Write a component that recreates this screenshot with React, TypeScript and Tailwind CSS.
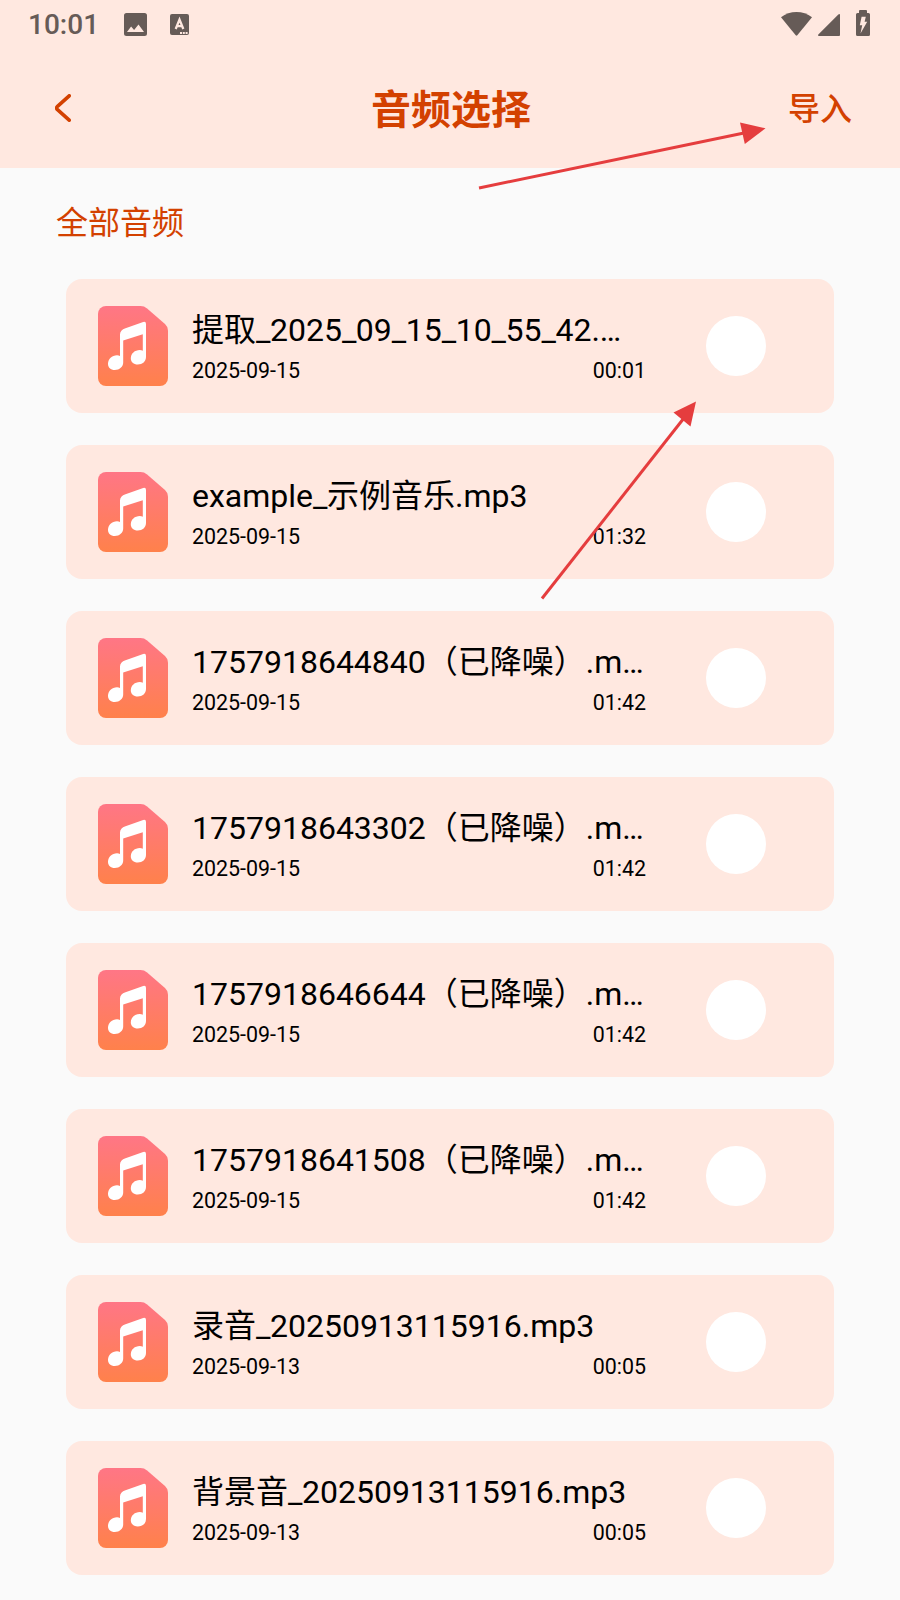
type Audio = {
  name: string;
  date: string;
  duration: string;
};

const audios: Audio[] = [
  { name: "提取_2025_09_15_10_55_42.…", date: "2025-09-15", duration: "00:01" },
  { name: "example_示例音乐.mp3", date: "2025-09-15", duration: "01:32" },
  { name: "1757918644840（已降噪）.m…", date: "2025-09-15", duration: "01:42" },
  { name: "1757918643302（已降噪）.m…", date: "2025-09-15", duration: "01:42" },
  { name: "1757918646644（已降噪）.m…", date: "2025-09-15", duration: "01:42" },
  { name: "1757918641508（已降噪）.m…", date: "2025-09-15", duration: "01:42" },
  { name: "录音_20250913115916.mp3", date: "2025-09-13", duration: "00:05" },
  { name: "背景音_20250913115916.mp3", date: "2025-09-13", duration: "00:05" },
];

function StatusBar() {
  return (
    <div className="flex h-12 items-center pl-7 pr-[30px] text-[#665b57]">
      <span className="w-[95.500px] pt-[2px] text-[28px] font-medium leading-none">10:01</span>
      <svg className="h-[23px] w-[23px]" viewBox="0 0 23 23" fill="currentColor">
        <path
          fillRule="evenodd"
          d="M2.5 0h18A2.5 2.5 0 0 1 23 2.5v18a2.5 2.5 0 0 1-2.5 2.5h-18A2.5 2.5 0 0 1 0 20.500v-18A2.500 2.500 0 0 1 2.500 0ZM3 19h17l-5.500-7.500-4.400 5.600-3-3.600Z"
        />
      </svg>
      <svg className="ml-[23px] h-[21px] w-[19px]" viewBox="0 0 19 21">
        <rect width="19" height="21" rx="2" fill="currentColor" />
        <path d="M5.700 15 9.500 5.500 13.300 15M7 12.200h5" fill="none" stroke="#ffe8e0" strokeWidth="2.300" />
        <path d="M10 18h2v2h-2zM12.800 18h2v2h-2zM15.600 18h2v2h-2z" fill="#ffe8e0" />
      </svg>
      <svg className="ml-auto h-6 w-[31px]" viewBox="0 0 31 24" fill="currentColor">
        <path d="M0 5.300C4.500 1.800 9.800 0 15.500 0S26.500 1.800 31 5.300L16.300 23.200q-.8.900-1.600 0Z" />
      </svg>
      <svg className="ml-1.5 mt-0.5 h-[22px] w-[22px]" viewBox="0 0 22 22" fill="currentColor">
        <path d="M22 1v20a1 1 0 0 1-1 1H1q-1.500-.2-.7-1.400L20.300.5Q22-.7 22 1Z" />
      </svg>
      <svg className="mb-0.5 ml-4 h-[26px] w-3.5" viewBox="0 0 14 26">
        <path
          d="M4 0h6a1 1 0 0 1 1 1v2h1.500A1.500 1.500 0 0 1 14 4.500v20a1.500 1.500 0 0 1-1.500 1.500h-11A1.500 1.500 0 0 1 0 24.500v-20A1.500 1.500 0 0 1 1.500 3H3V1a1 1 0 0 1 1-1Z"
          fill="currentColor"
        />
        <path d="M5.600 6.800h4.200L8.600 11.800h2.600L4.500 23.500l1.700-8.300H3.800Z" fill="#ffe8e0" />
      </svg>
    </div>
  );
}

function MusicFileIcon() {
  return (
    <svg className="h-20 w-[70px] shrink-0" viewBox="0 0 70 80">
      <defs>
        <linearGradient id="file" x1="0" y1="0" x2="0" y2="1">
          <stop offset="0" stopColor="#ff7686" />
          <stop offset="1" stopColor="#ff814b" />
        </linearGradient>
      </defs>
      <path
        d="M8 0h34.500q3.700 0 6.600 2.400L67 18q3 2.700 3 6.500V72a8 8 0 0 1-8 8H8a8 8 0 0 1-8-8V8a8 8 0 0 1 8-8Z"
        fill="url(#file)"
      />
      <path
        fillRule="evenodd"
        d="M27.500 22.200 45.200 16Q48 15.200 48 18v33c0 4.500-3.500 7.500-8.200 7.500-4.200 0-7-2.600-7-6 0-5 4-8.500 9-8.500 1 0 2 .2 3 .7V28.300L25.200 34.500v22c0 4.200-3.700 7.500-8.400 7.500-4.200 0-6.800-2.600-6.800-6 0-5 4-8.700 9-8.700 1.200 0 2.200.2 3 .7V28.500q0-4.500 5.500-6.300Z"
        fill="#fff"
      />
    </svg>
  );
}

function AudioCard({ audio }: { audio: Audio }) {
  return (
    <li className="flex h-[134px] items-center rounded-[16px] bg-[#ffe8e0] pl-8 pr-[68px]">
      <MusicFileIcon />
      <div className="ml-6 w-[454px] pt-[3px] text-black">
        <p className="h-[47px] whitespace-nowrap text-[32px] leading-[39px]">
          {audio.name.split(/(_)/).map((part, i) =>
            part === "_" ? (
              <span key={i} className="tracking-[-0.5px]">
                _
              </span>
            ) : (
              part
            ),
          )}
        </p>
        <div className="flex justify-between text-[21.400px] leading-[26px]">
          <span>{audio.date}</span>
          <span>{audio.duration}</span>
        </div>
      </div>
      <span className="ml-auto h-[60px] w-[60px] rounded-full bg-white" />
    </li>
  );
}

// hint arrows laid over the screen
function HintArrows() {
  return (
    <svg className="pointer-events-none absolute left-0 top-0 h-[1600px] w-[900px]" viewBox="0 0 900 1600">
      <g stroke="#e53d3e" strokeWidth="3">
        <path d="M479 188 744 133" />
        <path d="M542 598.500 684 418" />
      </g>
      <g fill="#e53d3e">
        <path d="M765.500 128.300 740 122.500 744.800 144Z" />
        <path d="M696 401.500 673.500 412.500 690.500 426.500Z" />
      </g>
    </svg>
  );
}

export default function App() {
  return (
    <div className="relative h-[1600px] w-[900px] overflow-hidden bg-[#fafafa] font-[Roboto,'Noto_Sans_CJK_SC',sans-serif]">
      <header className="h-[168px] bg-[#ffe8e0] text-[#d34100]">
        <StatusBar />
        <div className="grid h-[120px] grid-cols-3 items-center pl-[51px] pr-12">
          <svg className="ml-1 h-7 w-4" viewBox="0 0 16 28" fill="none" stroke="currentColor" strokeWidth="3.600" strokeLinecap="round" strokeLinejoin="round">
            <path d="M14.200 1.800 2.500 12.300q-1.800 1.700 0 3.400l11.700 10.500" />
          </svg>
          <h1 className="pr-px pt-1.5 text-center text-[40px] font-bold leading-[48px]">音频选择</h1>
          <button className="pt-px text-right text-[32px] font-medium leading-10">导入</button>
        </div>
      </header>
      <h2 className="ml-14 mt-[35px] h-10 text-[32px] leading-10 text-[#d34100]">全部音频</h2>
      <ul className="mx-[66px] mt-9 flex flex-col gap-8">
        {audios.map((audio) => (
          <AudioCard key={audio.name} audio={audio} />
        ))}
      </ul>
      <HintArrows />
    </div>
  );
}
